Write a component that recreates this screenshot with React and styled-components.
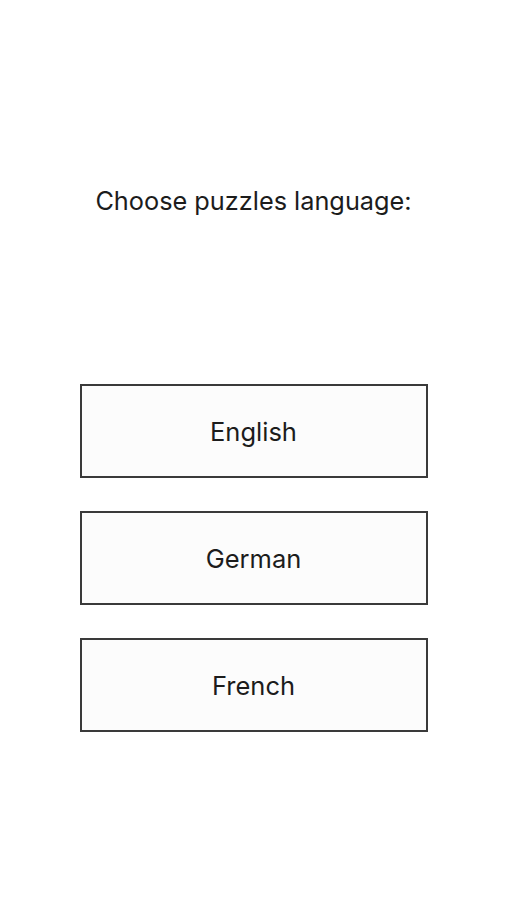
import React from "react";
import styled, { createGlobalStyle } from "styled-components";

const languages = ["English", "German", "French"];

const App = () => {
  return (
    <Screen>
      <GlobalStyle />
      <Title>Choose puzzles language:</Title>
      <List>
        {languages.map(lang => (
          <LanguageButton key={lang}>{lang}</LanguageButton>
        ))}
      </List>
    </Screen>
  );
};

const GlobalStyle = createGlobalStyle`
  html, body {
    margin: 0;
    padding: 0;
    background: #ffffff;
  }
`;

const Screen = styled.div`
  width: 507px;
  height: 900px;
  display: flex;
  flex-direction: column;
  align-items: center;
  font-family: Inter, "Liberation Sans", sans-serif;
  color: #1c1c1c;
`;

const Title = styled.h1`
  margin: 184px 0 0;
  font-size: 25.3px;
  font-weight: 400;
  line-height: 34px;
`;

const List = styled.div`
  margin-top: 166px;
  display: flex;
  flex-direction: column;
  gap: 33px;
`;

const LanguageButton = styled.button`
  width: 348px;
  height: 94px;
  border: 2px solid #3a3a3a;
  background: #fcfcfc;
  font-family: inherit;
  font-size: 25.5px;
  color: #1c1c1c;
  cursor: pointer;
  padding: 0;
`;

export default App;
